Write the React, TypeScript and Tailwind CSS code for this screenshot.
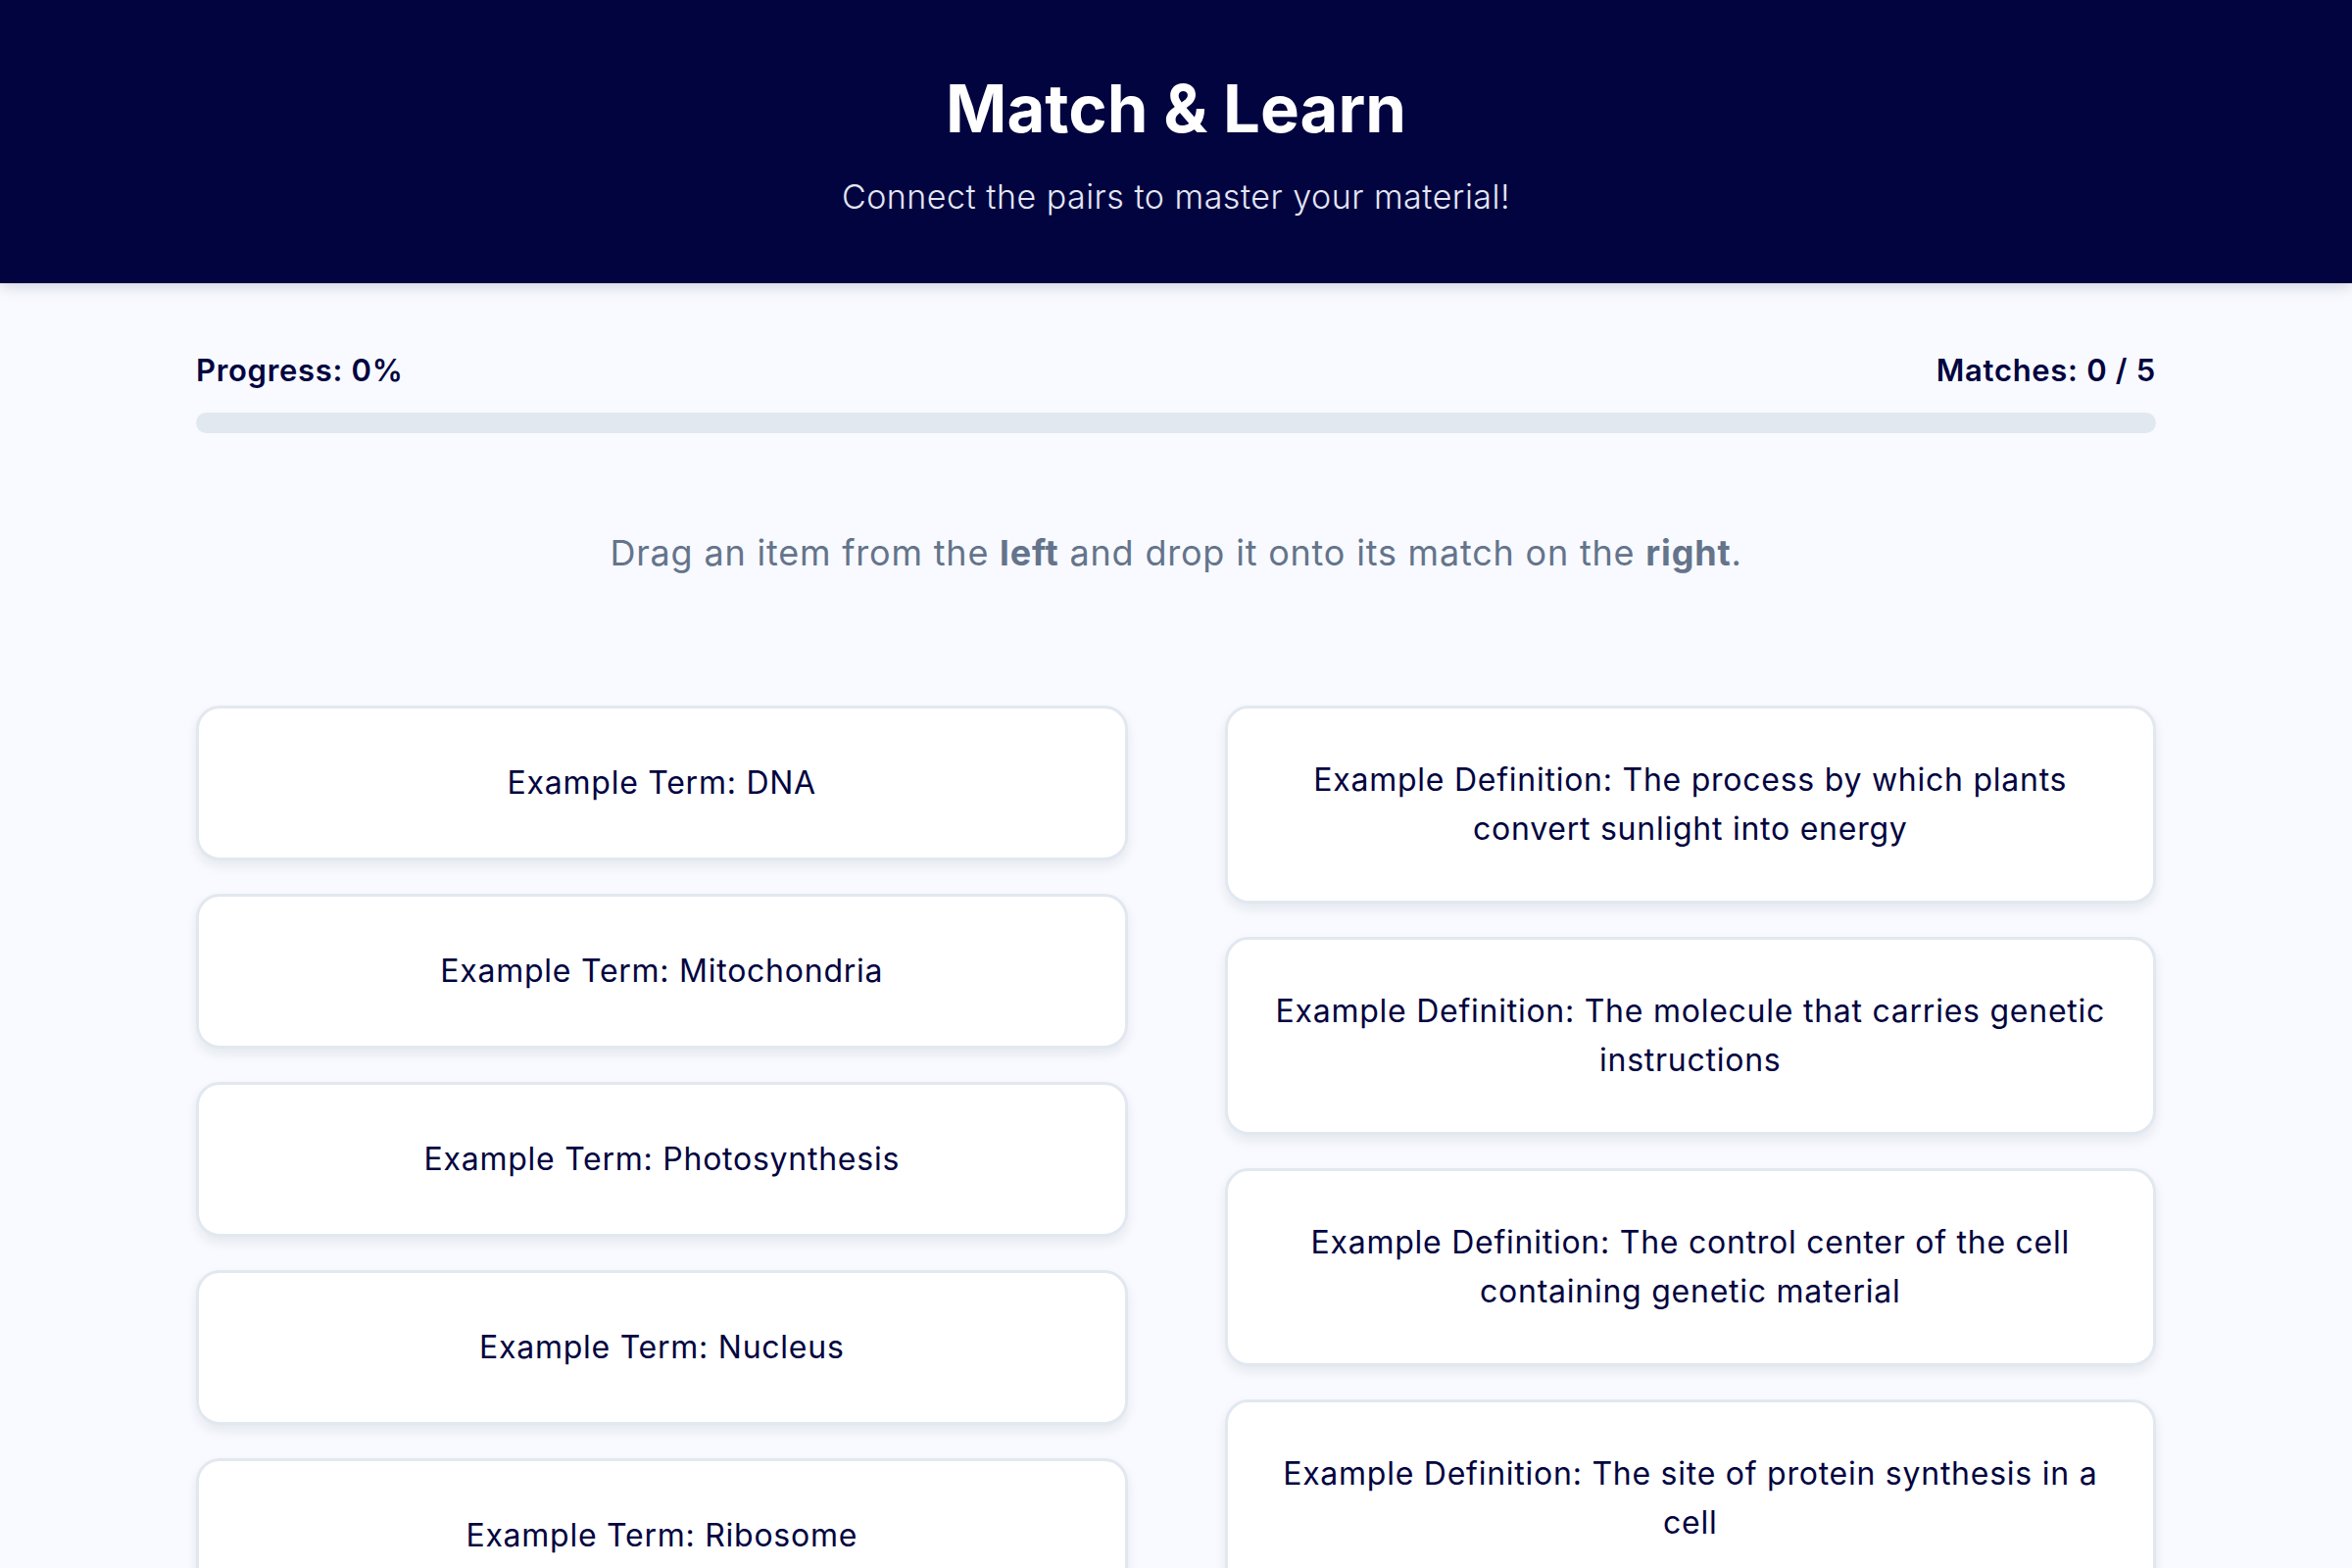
import React from "react"

const terms = [
  "Example Term: DNA",
  "Example Term: Mitochondria",
  "Example Term: Photosynthesis",
  "Example Term: Nucleus",
  "Example Term: Ribosome",
]

const definitions = [
  "Example Definition: The process by which plants convert sunlight into energy",
  "Example Definition: The molecule that carries genetic instructions",
  "Example Definition: The control center of the cell containing genetic material",
  "Example Definition: The site of protein synthesis in a cell",
  "Example Definition: The powerhouse of the cell",
]

function Card({ text }: { text: string }) {
  return (
    <div className="flex min-h-[158px] items-center justify-center rounded-[24px] border-[3px] border-[#e2e8f0] bg-white px-[44px] py-[48px] text-center text-[32px] leading-[50px] tracking-[0.75px] text-[#02043f] shadow-[0_6px_12px_rgba(15,23,42,0.08)] cursor-grab select-none">
      {text}
    </div>
  )
}

export default function App() {
  return (
    <div className="min-h-screen bg-[#f8faff] font-['Inter','Liberation_Sans',sans-serif]">
      {/* Header */}
      <header className="relative z-10 bg-[#02043f] pt-[72px] pb-[66px] text-center shadow-[0_4px_14px_rgba(2,4,63,0.15)]">
        <h1 className="text-[67px] font-bold leading-[77px] text-white">Match &amp; Learn</h1>
        <p className="mt-[29px] text-[34px] font-light leading-[45px] tracking-[0.5px] text-[#e4e6f5]">
          Connect the pairs to master your material!
        </p>
      </header>

      <main className="mx-auto w-[2000px] pt-[69px] pb-[80px]">
        {/* Progress */}
        <div className="flex items-center justify-between text-[31px] font-semibold leading-[40px] tracking-[0.7px] text-[#02043f]">
          <span>Progress: 0%</span>
          <span>Matches: 0 / 5</span>
        </div>
        <div className="mt-[23px] h-[21px] w-full overflow-hidden rounded-full bg-[#e2e8f0]">
          <div className="h-full rounded-full bg-[#02043f]" style={{ width: "0%" }} />
        </div>

        {/* Instructions */}
        <p className="mt-[100px] text-center text-[36px] leading-[45px] tracking-[0.8px] text-[#64748b]">
          Drag an item from the <strong className="font-bold">left</strong> and drop it onto its match on the{" "}
          <strong className="font-bold">right</strong>.
        </p>

        {/* Board */}
        <div className="mt-[133px] grid grid-cols-2 items-start gap-x-[99px]">
          <div className="flex flex-col gap-[34px]">
            {terms.map((t) => (
              <Card key={t} text={t} />
            ))}
          </div>
          <div className="flex flex-col gap-[34px]">
            {definitions.map((d) => (
              <Card key={d} text={d} />
            ))}
          </div>
        </div>
      </main>
    </div>
  )
}
